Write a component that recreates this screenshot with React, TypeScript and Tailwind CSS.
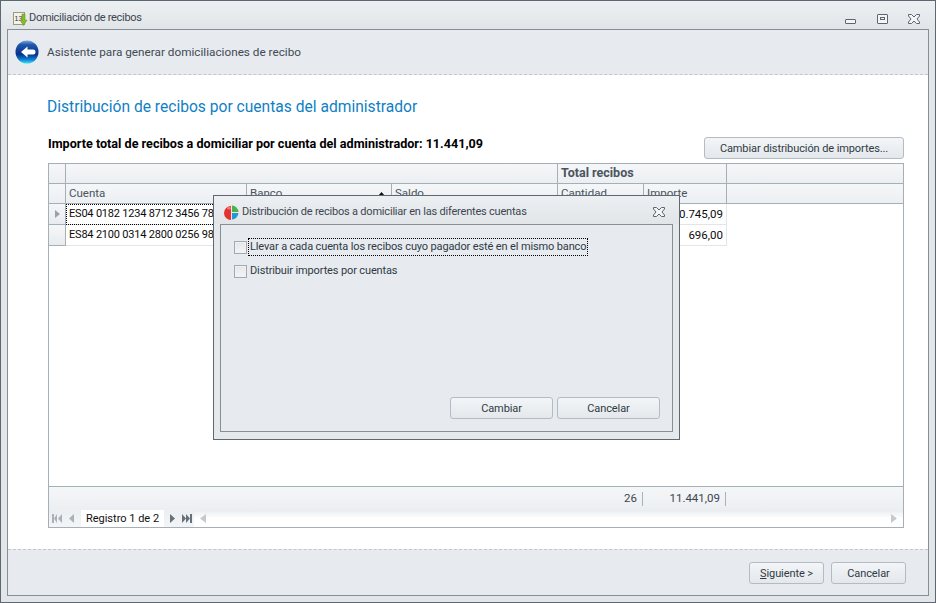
import React from "react";

const font = "font-['Roboto','Liberation_Sans',sans-serif]";

function WinIcon() {
  return (
    <svg width="16" height="16" viewBox="0 0 16 16">
      <rect x="1.500" y="1.500" width="11" height="12" fill="#f4f2e6" stroke="#9a9a8a" />
      <text x="2.500" y="10" fontSize="7" fontFamily="Liberation Sans" fill="#333">13</text>
      <path d="M10 3h3v6h2l-3.500 5.500L8 9h2z" fill="#86bc2a" stroke="#5f8f18" strokeWidth="0.5" />
    </svg>
  );
}

function BackIcon() {
  return (
    <svg width="24" height="24" viewBox="0 0 24 24">
      <defs>
        <linearGradient id="backg" x1="0" y1="0" x2="0" y2="1">
          <stop offset="0" stopColor="#7fa8dc" />
          <stop offset="0.18" stopColor="#1f58ac" />
          <stop offset="0.6" stopColor="#0a2f8a" />
          <stop offset="0.82" stopColor="#0a7fd0" />
          <stop offset="1" stopColor="#3fe0f5" />
        </linearGradient>
      </defs>
      <circle cx="12" cy="12" r="11.500" fill="url(#backg)" />
      <path d="M6 12L12.500 6.500v3h5.500a1.500 1.500 0 0 1 0 5h-5.500v3z" fill="#ffffff" />
    </svg>
  );
}

function PieIcon() {
  return (
    <svg width="15" height="15" viewBox="0 0 15 15">
      <path d="M7 1a7 7 0 0 0 0 14z" fill="#e6322e" />
      <path d="M8 .5a7 7 0 0 1 6.500 6.500H8z" fill="#4fb04a" />
      <path d="M8 8h6.500A7 7 0 0 1 8 14.500z" fill="#1f9ad6" />
      <ellipse cx="5" cy="3.200" rx="2" ry="1.200" fill="#ffffff" opacity="0.35" />
    </svg>
  );
}

function CloseIcon({ color = "#5c666f" }: { color?: string }) {
  return (
    <svg width="12" height="10" viewBox="0 0 12 10">
      <path
        d="M.5.5h3l2.500 2.500L8.500.5h3v1.500L9 5l2.500 3v1.500h-3L6 7 3.500 9.500h-3V8L3 5 .5 2z"
        fill="#f3f5f7"
        stroke={color}
        strokeWidth="1"
      />
    </svg>
  );
}

function Btn({ label, cls, children }: { label?: string; cls: string; children?: React.ReactNode }) {
  return (
    <button
      className={`flex shrink-0 items-center justify-center whitespace-nowrap rounded-[3px] border border-[#b4bcc3] bg-gradient-to-b from-[#f3f5f7] to-[#e4e8ec] pt-[3px] text-[11px] tracking-[-0.1px] text-[#2f3a44] ${cls}`}
    >
      {children ?? label}
    </button>
  );
}

function Nav({ d, color = "#aab2b9" }: { d: string; color?: string }) {
  return (
    <svg width="10" height="9" viewBox="0 0 10 9" className="shrink-0">
      <path d={d} fill={color} />
    </svg>
  );
}

const head = "border-r border-[#a5afb8] px-[3px] flex items-center text-[11.500px] text-[#4a545e]";

function Row({ active, cuenta, importe }: { active?: boolean; cuenta: string; importe: string }) {
  return (
    <div className="flex h-[21px] text-[11px] text-[#0b0b0b]">
      <div className="flex w-[17px] items-center justify-center border-r border-b border-[#a5afb8] bg-gradient-to-b from-[#f5f6f8] to-[#e9ecef]">
        {active && (
          <svg width="5" height="8" viewBox="0 0 5 8">
            <path d="M0 0l5 4-5 4z" fill="#9aa2a9" />
          </svg>
        )}
      </div>
      <div
        className={`flex w-[181px] items-center overflow-hidden whitespace-nowrap border-r border-b border-[#e3e5e7] px-[3px] pt-[1px] tracking-[-0.2px] ${active ? "outline-1 -outline-offset-1 outline-dotted outline-black" : ""}`}
      >
        {cuenta}
      </div>
      <div className="w-[145px] border-r border-b border-[#e3e5e7]" />
      <div className="w-[166px] border-r border-b border-[#e3e5e7]" />
      <div className="w-[86px] border-r border-b border-[#e3e5e7]" />
      <div className="flex w-[83px] items-center justify-end border-r border-b border-[#e3e5e7] px-[3px] pt-[1px] text-[11.500px]">
        {importe}
      </div>
    </div>
  );
}

function Check({ label, focus }: { label: string; focus?: boolean }) {
  return (
    <div className="flex h-[16px] items-center gap-[2px] text-[11px] tracking-[-0.13px] text-[#2f3a44]">
      <div className="h-[13px] w-[13px] border border-[#a3abb2] bg-gradient-to-b from-[#e4e6e8] to-[#f4f5f6] shadow-[inset_0_0_0_1px_#eef0f2]" />
      <span className={`px-[1px] ${focus ? "outline-1 outline-dotted outline-black" : ""}`}>{label}</span>
    </div>
  );
}

export default function App() {
  return (
    <div className={`relative flex h-[603px] w-[936px] flex-col overflow-hidden border border-[#5d6872] bg-[#e3e6e9] ${font}`}>
      {/* barra de titulo */}
      <div className="flex h-[28px] items-center bg-gradient-to-b from-[#edf0f2] to-[#e1e5e8] pl-[11px] pr-[15px] pt-[7px]">
        <WinIcon />
        <span className="ml-[1px] text-[11px] tracking-[-0.3px] text-[#3c4650]">Domiciliación de recibos</span>
        <div className="ml-auto flex items-center gap-[20px]">
          <div className="mt-[5px] h-[5px] w-[11px] rounded-[1px] border border-[#5c666f] bg-[#f3f5f7]" />
          <div className="ml-[1px] flex h-[10px] w-[11px] items-center justify-center rounded-[1px] border border-[#5c666f] bg-[#f3f5f7]">
            <div className="h-[3px] w-[5px] border border-[#5c666f]" />
          </div>
          <CloseIcon />
        </div>
      </div>

      <div className="mx-[6px] flex h-[567px] flex-col border border-[#878f96] bg-white">
        <div className="flex h-[45px] items-center gap-[8px] border-b border-dashed border-[#c1c7cc] bg-[#e7ebef] pl-[7px]">
          <BackIcon />
          <span className="pt-[1px] text-[11.750px] text-[#3f4a54]">Asistente para generar domiciliaciones de recibo</span>
        </div>

        <div className="flex flex-1 flex-col pl-[40px] pr-[24px]">
          <h1 className="ml-[-1px] mt-[22px] h-[20px] text-[15.600px] leading-[20px] text-[#0f7fc4]">
            Distribución de recibos por cuentas del administrador
          </h1>

          <div className="mt-[9px] flex h-[37px] items-start justify-between">
            <div className="mt-[10px] text-[12.600px] font-bold leading-[16px] text-black">
              Importe total de recibos a domiciliar por cuenta del administrador: 11.441,09
            </div>
            <Btn label="Cambiar distribución de importes..." cls="mt-[11px] h-[22px] w-[200px]" />
          </div>

          {/* rejilla */}
          <div className="flex h-[365px] w-[856px] flex-col border border-[#a5afb8]">
            <div className="flex h-[20px] border-b border-[#a5afb8] bg-gradient-to-b from-[#f5f6f8] to-[#eceff2]">
              <div className={`${head} w-[17px]`} />
              <div className={`${head} w-[492px]`} />
              <div className={`${head} w-[169px] text-[12.500px] font-bold text-[#3c4650]`}>Total recibos</div>
            </div>
            <div className="flex h-[20px] border-b border-[#a5afb8] bg-gradient-to-b from-[#f5f6f8] to-[#eceff2]">
              <div className={`${head} w-[17px]`} />
              <div className={`${head} w-[181px]`}>Cuenta</div>
              <div className={`${head} w-[145px] justify-between`}>
                Banco
                <svg width="7" height="4" viewBox="0 0 7 4" className="mr-[3px]">
                  <path d="M3.500 0L7 4H0z" fill="#111" />
                </svg>
              </div>
              <div className={`${head} w-[166px]`}>Saldo</div>
              <div className={`${head} w-[86px]`}>Cantidad</div>
              <div className={`${head} w-[83px]`}>Importe</div>
            </div>

            <div className="flex-1 bg-white">
              <Row active cuenta="ES04 0182 1234 8712 3456 7890" importe="10.745,09" />
              <Row cuenta="ES84 2100 0314 2800 0256 9876" importe="696,00" />
            </div>

            <div className="flex h-[24px] items-center justify-end border-t border-[#a5afb8] bg-gradient-to-b from-[#f5f6f8] to-[#eceff2] pr-[177px] text-[11.500px] text-[#3c4650]">
              <span className="flex h-[14px] items-center border-r border-[#aab2b9] pr-[5px]">26</span>
              <span className="flex h-[14px] w-[83px] items-center justify-end border-r border-[#aab2b9] pr-[5px]">
                11.441,09
              </span>
            </div>

            <div className="flex h-[17px] items-center bg-gradient-to-b from-[#eceff2] to-[#f3f5f6]">
              <div className="flex h-full w-[32px] items-center gap-[4px] pl-[3px]">
                <Nav d="M0 0h2v9H0zM5 0v9L2 4.500zM10 0v9L6 4.500z" />
                <Nav d="M8 0v9L3 4.500z" />
              </div>
              <div className="flex h-full w-[83px] items-center justify-center bg-white pt-[2px] text-[11px] text-[#111]">
                Registro 1 de 2
              </div>
              <div className="flex h-full w-[30px] items-center gap-[4px] pl-[4px]">
                <Nav d="M2 0v9l5-4.500z" color="#67717b" />
                <Nav d="M0 0v9l4-4.500zM4 0v9l4-4.500zM8 0h2v9H8z" color="#67717b" />
              </div>
              <div className="flex h-full flex-1 items-center justify-between bg-gradient-to-b from-[#e9ecef] via-white to-white pl-[6px] pr-[6px]">
                <svg width="6" height="9" viewBox="0 0 6 9">
                  <path d="M6 0v9L0 4.500z" fill="#c5cace" />
                </svg>
                <svg width="6" height="9" viewBox="0 0 6 9">
                  <path d="M0 0v9l6-4.500z" fill="#c5cace" />
                </svg>
              </div>
            </div>
          </div>
        </div>

        <div className="flex h-[46px] items-start justify-end gap-[7px] border-t border-dashed border-[#c1c7cc] bg-[#e7ebef] pr-[22px] pt-[12px]">
          <Btn cls="h-[22px] w-[75px]">
            <span>
              <span className="underline">S</span>iguiente &gt;
            </span>
          </Btn>
          <Btn label="Cancelar" cls="h-[22px] w-[75px]" />
        </div>
      </div>

      {/* dialogo */}
      <div className="absolute left-[212px] top-[194px] flex h-[245px] w-[467px] flex-col border border-[#5d6872] bg-[#e5e9ec]">
        <div className="flex h-[28px] items-center bg-gradient-to-b from-[#edf0f2] to-[#e1e5e8] pl-[10px] pr-[14px] pt-[4px]">
          <PieIcon />
          <span className="ml-[3px] text-[11px] tracking-[-0.2px] text-[#3c4650]">
            Distribución de recibos a domiciliar en las diferentes cuentas
          </span>
          <div className="ml-auto">
            <CloseIcon />
          </div>
        </div>
        <div className="mx-[6px] flex h-[208px] flex-col border border-[#878f96] bg-[#e7ebef] pl-[13px] pr-[12px] pt-[14px]">
          <Check label="Llevar a cada cuenta los recibos cuyo pagador esté en el mismo banco" focus />
          <div className="mt-[8px]">
            <Check label="Distribuir importes por cuentas" />
          </div>
          <div className="mt-auto mb-[12px] flex justify-end gap-[4px]">
            <Btn label="Cambiar" cls="h-[22px] w-[103px]" />
            <Btn label="Cancelar" cls="h-[22px] w-[103px]" />
          </div>
        </div>
      </div>
    </div>
  );
}
